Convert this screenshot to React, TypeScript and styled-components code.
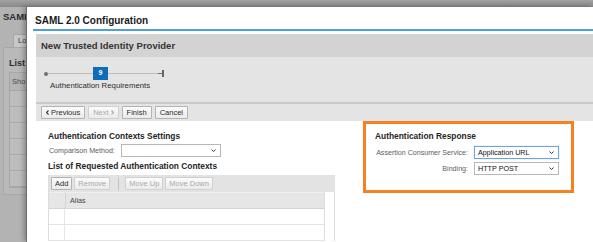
import styled, { createGlobalStyle } from 'styled-components';

const GlobalStyle = createGlobalStyle`
  html, body { margin: 0; padding: 0; }
  body { font-family: "Liberation Sans", Arial, sans-serif; background: #b3b3b3; }
  * { box-sizing: border-box; }
`;

const Screen = styled.div`
  position: relative;
  width: 593px;
  height: 242px;
  overflow: hidden;
  background: #b3b3b3;
`;

/* dimmed page behind the modal */
const BackBar = styled.div`
  height: 7px;
  background: linear-gradient(#a2a2a2, #888888);
`;
const BackTitle = styled.div`
  margin: 4px 0 0 3px;
  font-size: 9.5px;
  line-height: 12px;
  font-weight: bold;
  color: #2b2b2b;
`;
const BackTab = styled.div`
  width: 40px;
  height: 13px;
  margin: 11px 0 0 13px;
  padding-left: 4px;
  font-size: 7.5px;
  line-height: 12px;
  color: #3a3a3a;
  background: #c8c8c8;
  border: 1px solid #a5a5a5;
  border-bottom: none;
`;
const BackPanel = styled.div`
  width: 60px;
  height: 148px;
  margin-left: 3px;
  padding: 9px 0 0 5px;
  background: #b9b9b9;
  border: 1px solid #a7a7a7;
`;
const BackHeading = styled.div`
  font-size: 9px;
  font-weight: bold;
  line-height: 12px;
  color: #2f2f2f;
`;
const BackTable = styled.div`
  margin-top: 3px;
  border: 1px solid #a6a6a6;
`;
const BackHead = styled.div`
  height: 18px;
  padding-left: 2px;
  font-size: 7.5px;
  line-height: 18px;
  color: #4a4a4a;
  background: #b5b5b5;
  border-bottom: 1px solid #a6a6a6;
`;
const BackRow = styled.div`
  height: 16px;
  background: #bdbdbd;
  border-bottom: 1px solid #a9a9a9;
`;

/* modal */
const Dialog = styled.section`
  position: absolute;
  top: 7px;
  left: 27px;
  right: 0;
  bottom: 0;
  background: #fff;
  box-shadow: -1px 0 0 #6e6e6e, -3px 0 5px rgba(0, 0, 0, 0.3);
`;
const DialogTitle = styled.h1`
  margin: 0;
  height: 22px;
  padding: 5px 0 0 8px;
  font-size: 10px;
  line-height: 17px;
  font-weight: bold;
  color: #1a1a1a;
`;
const AccentRule = styled.div`
  height: 2px;
  margin-left: 6px;
  background: #4c9fd7;
`;
const Wizard = styled.div`
  margin: 3px 0 0 9px;
`;
const WizardHeader = styled.h2`
  margin: 0;
  height: 23px;
  padding-left: 5px;
  font-size: 9.5px;
  line-height: 23px;
  font-weight: bold;
  color: #333;
  background: #d3d3d3;
`;
const StepArea = styled.div`
  height: 47px;
  padding: 10px 0 0 8px;
  background: #e4e4e4;
  border-bottom: 2px solid #c9c9c9;
`;
const Track = styled.div`
  display: flex;
  align-items: center;
  height: 13px;
`;
const Dot = styled.span`
  width: 4px;
  height: 4px;
  border-radius: 50%;
  background: #6f6f6f;
`;
const TrackLine = styled.span<{ $w: number; $capped?: boolean }>`
  width: ${p => p.$w}px;
  height: 1px;
  background: ${p =>
    p.$capped ? 'linear-gradient(to right, #bdbdbd 92%, #6a6a6a 92%)' : '#bdbdbd'};
`;
const StepBox = styled.span`
  width: 15px;
  height: 13px;
  background: #0f6cb8;
  color: #fff;
  font-size: 7px;
  font-weight: bold;
  line-height: 12px;
  text-align: center;
`;
const EndCap = styled.span`
  width: 2px;
  height: 7px;
  background: #666;
`;
const StepLabel = styled.div`
  margin: 1px 0 0 6px;
  font-size: 7.8px;
  line-height: 10px;
  color: #2e2e2e;
`;
const ButtonBar = styled.div`
  display: flex;
  align-items: flex-start;
  gap: 3px;
  height: 17px;
  padding: 2px 0 0 5px;
  background: #e4e4e4;
`;
const Btn = styled.button<{ $disabled?: boolean }>`
  display: inline-flex;
  align-items: center;
  gap: 2px;
  height: 13px;
  margin: 0;
  padding: 0 4px;
  font-family: inherit;
  font-size: 7.5px;
  line-height: 11px;
  color: ${p => (p.$disabled ? '#a9a9a9' : '#2a2a2a')};
  background: linear-gradient(#fbfbfb, #ebebeb);
  border: 1px solid ${p => (p.$disabled ? '#d0d0d0' : '#b3b3b3')};
  border-radius: 1px;
`;
const ToolBtn = styled(Btn)`
  padding: 0 3px;
`;

const Content = styled.div`
  display: flex;
  gap: 28px;
  padding-left: 12px;
`;
const LeftCol = styled.div`
  width: 287px;
  padding-top: 10px;
`;
const SectionTitle = styled.h3<{ $gap?: number }>`
  margin: ${p => p.$gap ?? 0}px 0 0;
  font-size: 8.4px;
  line-height: 11px;
  font-weight: bold;
  color: #262626;
`;
const FormRow = styled.div`
  display: flex;
  align-items: center;
  gap: 6px;
  margin: 2px 0 0 1px;
`;
const FieldLabel = styled.span`
  font-size: 7.1px;
  color: #5e5e5e;
  text-align: right;
`;
const SelectBox = styled.div<{ $w: number; $focused?: boolean }>`
  display: flex;
  align-items: center;
  justify-content: space-between;
  width: ${p => p.$w}px;
  height: 13px;
  padding: 0 4px 0 3px;
  font-size: 7.2px;
  color: #111;
  background: #fff;
  border: 1px solid ${p => (p.$focused ? '#6aa7d8' : '#b7b7b7')};
  box-shadow: ${p => (p.$focused ? '0 0 1px #9cc8ec' : 'none')};
`;

const Table = styled.div`
  margin-top: 3px;
  border-left: 1px solid #dcdcdc;
`;
const TableToolbar = styled.div`
  display: flex;
  align-items: center;
  gap: 2px;
  height: 17px;
  padding-left: 2px;
  background: #e3e3e3;
`;
const ToolSep = styled.span`
  width: 1px;
  height: 12px;
  margin: 0 4px 0 6px;
  background: #c4c4c4;
`;
const Grid = styled.div`
  display: grid;
  grid-template-columns: 16px 1fr 11px;
`;
const HeadCell = styled.div`
  height: 17px;
  padding-left: 4px;
  font-size: 7.2px;
  line-height: 16px;
  color: #444;
  background: #e6e6e6;
  border-top: 1px solid #efefef;
  border-bottom: 1px solid #d4d4d4;
  & + & { border-left: 1px solid #d6d6d6; }
`;
const Cell = styled.div<{ $first?: boolean }>`
  height: 16px;
  border-bottom: 1px solid #e4e4e4;
  border-right: ${p => (p.$first ? '1px solid #e4e4e4' : 'none')};
`;
const Gutter = styled.div`
  grid-column: 3;
  grid-row: 1 / span 3;
  border-left: 1px solid #dedede;
  border-right: 1px solid #dedede;
`;

const OrangeBox = styled.div`
  width: 211px;
  height: 72px;
  padding: 7px 0 0 9px;
  border: 3px solid #f68121;
`;
const ResponseGrid = styled.div`
  display: grid;
  grid-template-columns: 93px 85px;
  column-gap: 6px;
  row-gap: 3px;
  align-items: center;
  margin-top: 4px;
`;

const ChevronDown = () => (
  <svg width="5" height="3" viewBox="0 0 5 3">
    <path d="M0.5 0.5 L2.5 2.5 L4.5 0.5" fill="none" stroke="#333" strokeWidth="1" />
  </svg>
);
const ChevronSide = ({ dir, color }: { dir: 'left' | 'right'; color: string }) => (
  <svg width="3" height="5" viewBox="0 0 3 5">
    <path
      d={dir === 'left' ? 'M2.5 0.5 L0.5 2.5 L2.5 4.5' : 'M0.5 0.5 L2.5 2.5 L0.5 4.5'}
      fill="none"
      stroke={color}
      strokeWidth="1.1"
    />
  </svg>
);

const App = () => {
  return (
    <Screen>
      <GlobalStyle />
      <BackBar />
      <BackTitle>SAML</BackTitle>
      <BackTab>Lo</BackTab>
      <BackPanel>
        <BackHeading>List</BackHeading>
        <BackTable>
          <BackHead>Sho</BackHead>
          {[0, 1, 2, 3, 4, 5].map(i => (
            <BackRow key={i} />
          ))}
        </BackTable>
      </BackPanel>

      <Dialog>
        <DialogTitle>SAML 2.0 Configuration</DialogTitle>
        <AccentRule />
        <Wizard>
          <WizardHeader>New Trusted Identity Provider</WizardHeader>
          <StepArea>
            <Track>
              <Dot />
              <TrackLine $w={45} />
              <StepBox>9</StepBox>
              <TrackLine $w={54} $capped />
              <EndCap />
            </Track>
            <StepLabel>Authentication Requirements</StepLabel>
          </StepArea>
          <ButtonBar>
            <Btn>
              <ChevronSide dir="left" color="#333" />
              Previous
            </Btn>
            <Btn $disabled>
              Next
              <ChevronSide dir="right" color="#aaa" />
            </Btn>
            <Btn>Finish</Btn>
            <Btn>Cancel</Btn>
          </ButtonBar>

          <Content>
            <LeftCol>
              <SectionTitle>Authentication Contexts Settings</SectionTitle>
              <FormRow>
                <FieldLabel>Comparison Method:</FieldLabel>
                <SelectBox $w={100}>
                  <span />
                  <ChevronDown />
                </SelectBox>
              </FormRow>
              <SectionTitle $gap={4}>List of Requested Authentication Contexts</SectionTitle>
              <Table>
                <TableToolbar>
                  <ToolBtn>Add</ToolBtn>
                  <ToolBtn $disabled>Remove</ToolBtn>
                  <ToolSep />
                  <ToolBtn $disabled>Move Up</ToolBtn>
                  <ToolBtn $disabled>Move Down</ToolBtn>
                </TableToolbar>
                <Grid>
                  <HeadCell />
                  <HeadCell>Alias</HeadCell>
                  <Gutter />
                  <Cell $first />
                  <Cell />
                  <Cell $first />
                  <Cell />
                </Grid>
              </Table>
            </LeftCol>

            <OrangeBox>
              <SectionTitle>Authentication Response</SectionTitle>
              <ResponseGrid>
                <FieldLabel>Assertion Consumer Service:</FieldLabel>
                <SelectBox $w={85} $focused>
                  <span>Application URL</span>
                  <ChevronDown />
                </SelectBox>
                <FieldLabel>Binding:</FieldLabel>
                <SelectBox $w={85}>
                  <span>HTTP POST</span>
                  <ChevronDown />
                </SelectBox>
              </ResponseGrid>
            </OrangeBox>
          </Content>
        </Wizard>
      </Dialog>
    </Screen>
  );
};

export default App;
